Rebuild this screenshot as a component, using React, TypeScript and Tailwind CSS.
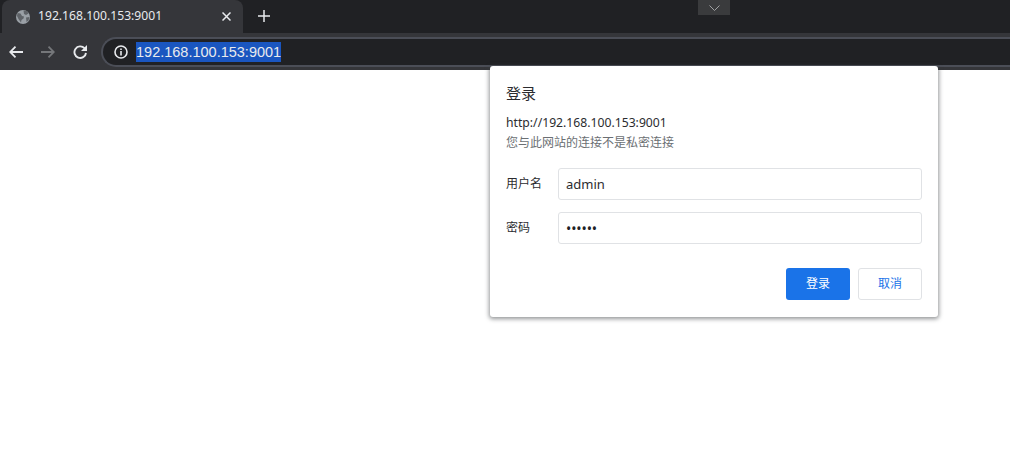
const ui = "font-['Noto_Sans','Noto_Sans_CJK_SC',sans-serif]";

const Dialog = () => {
  return (
    <div className={`absolute left-[490px] top-[66px] h-[251px] w-[448px] rounded-[3px] bg-white px-4 pt-[16px] text-[12px] text-[#2b2c2f] shadow-[0_1px_4px_1px_rgba(60,64,67,0.55)] ${ui}`}>
      <h1 className="h-[22px] text-[15px] leading-[22px]">登录</h1>
      <p className="mt-[9px] h-[20px] text-[12.2px] leading-[20px]">http://192.168.100.153:9001</p>
      <p className="h-[20px] leading-[20px] text-[#6b6f73]">您与此网站的连接不是私密连接</p>
      <div className="mt-[15px] flex flex-col gap-3">
        <label className="flex items-center">
          <span className="w-[52px]">用户名</span>
          <input
            readOnly
            value="admin"
            className="h-8 w-[364px] rounded-[3px] border border-[#e0e2e5] px-[7px] text-[13px] text-[#2b2c2f] outline-none"
          />
        </label>
        <label className="flex items-center">
          <span className="w-[52px]">密码</span>
          <input
            readOnly
            type="password"
            value="secret"
            className="h-8 w-[364px] rounded-[3px] border border-[#e0e2e5] px-[7px] text-[14px] tracking-[-0.1px] text-[#202124] outline-none"
          />
        </label>
      </div>
      <div className="mt-6 flex justify-end gap-2">
        <button className="h-8 w-16 rounded-[3px] bg-[#1a73e8] text-white">登录</button>
        <button className="h-8 w-16 rounded-[3px] border border-[#e0e2e5] bg-white text-[#1a73e8]">取消</button>
      </div>
    </div>
  );
};

const App = () => {
  return (
    <div className={`relative h-[464px] w-[1010px] overflow-hidden bg-white ${ui}`}>
      <div className="relative h-[33px] bg-[#202124]">
        <div className="absolute left-[2px] top-0 flex h-[33px] w-[241px] items-center rounded-t-[8px] bg-[#35363a] pl-[13px] pr-[12px]">
          <svg width="16" height="16" viewBox="0 0 16 16">
            <circle cx="8" cy="8" r="7" fill="#9aa0a6" />
            <path d="M2.5 4l3 .5 1.5 2.5 2 .5-.5 2-2 1.5-.5 2.5L3.5 10 2 7zM8.5 1.5l3.5.5 1.5 2.5-2.5 1.5-2-1zM11 8.5l3.5-.5-1 3.5-2 1.5z" fill="#5f6368" />
          </svg>
          <span className="ml-[7px] flex-1 text-[12.15px] text-[#e8eaed]">192.168.100.153:9001</span>
          <svg width="9" height="9" viewBox="0 0 9 9" stroke="#e8eaed" strokeWidth="1.5">
            <path d="M.5.5l8 8M8.5.5l-8 8" />
          </svg>
        </div>
        <svg className="absolute left-[258px] top-[10px]" width="12" height="12" viewBox="0 0 12 12" stroke="#e8eaed" strokeWidth="1.5">
          <path d="M6 0v12M0 6h12" />
        </svg>
        <div className="absolute left-[698px] top-0 flex h-[15px] w-8 items-center justify-center bg-[#3a3b3d]">
          <svg width="11" height="6" viewBox="0 0 11 6" fill="none" stroke="#a0a1a3">
            <path d="M.5.5l5 5 5-5" />
          </svg>
        </div>
      </div>
      <div className="flex h-[37px] items-center bg-[#35363a] pl-[9px]">
        <svg width="14" height="12" viewBox="0 0 14 12" fill="none" stroke="#e8eaed" strokeWidth="1.8">
          <path d="M14 6H1.5M6.5 .7L1.2 6l5.3 5.3" />
        </svg>
        <svg className="ml-[18px]" width="14" height="12" viewBox="0 0 14 12" fill="none" stroke="#75777a" strokeWidth="1.8">
          <path d="M0 6h12.5M7.5 .7L12.8 6l-5.3 5.3" />
        </svg>
        <svg className="ml-[18px]" width="14" height="14" viewBox="0 0 14 14" fill="none">
          <path d="M11.5 3.2A5.8 5.8 0 1 0 13 8" stroke="#e8eaed" strokeWidth="1.9" />
          <path d="M14 0v6H8z" fill="#e8eaed" />
        </svg>
        <div className="ml-[14px] flex h-[30px] flex-1 items-center rounded-l-[15px] border-2 border-r-0 border-[#4b4e57] bg-[#202124] pl-[10px]">
          <svg width="16" height="16" viewBox="0 0 16 16">
            <circle cx="8" cy="8" r="6" fill="none" stroke="#e8eaed" strokeWidth="1.6" />
            <path d="M7.2 7h1.6v4.5H7.2zM7.2 4.4h1.6V6H7.2z" fill="#e8eaed" />
          </svg>
          <span className="ml-[7px] whitespace-nowrap bg-[#1a56c0] font-['Liberation_Sans',sans-serif] text-[14.5px] leading-[20px] text-[#e8eaed]">192.168.100.153:9001</span>
        </div>
      </div>
      <Dialog />
    </div>
  );
};

export default App;
